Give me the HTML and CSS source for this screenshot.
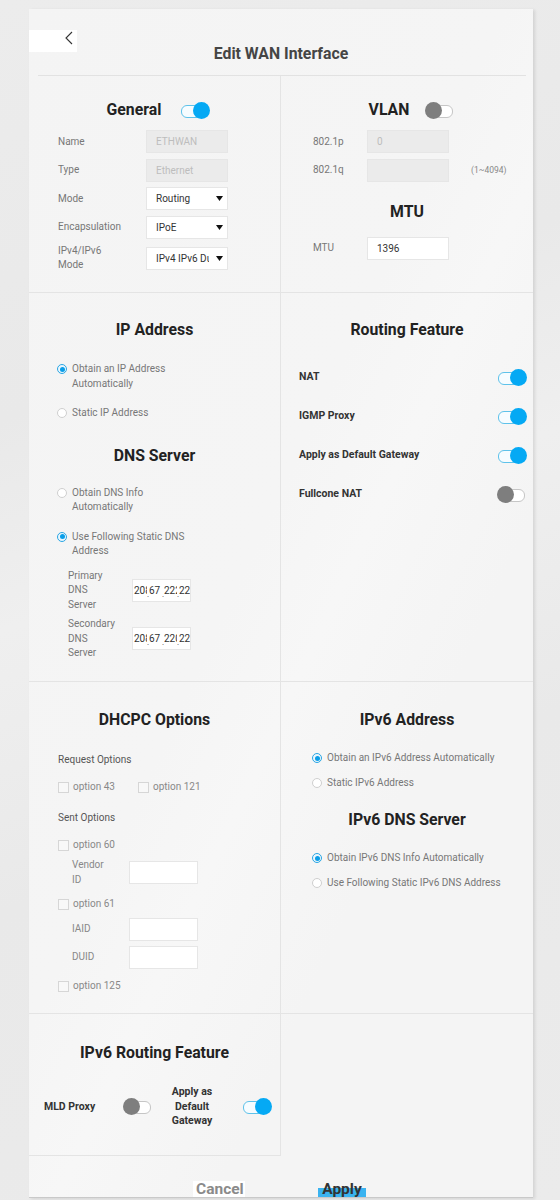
FILE: index.html
```html
<!DOCTYPE html>
<html>
<head>
<meta charset="utf-8">
<link rel="stylesheet" href="styles.css">
</head>
<body>
<div class="panel">
  <div class="head">
    <div class="back"><svg width="8" height="14" viewBox="0 0 8 14"><path d="M7 1 L1 7 L7 13" fill="none" stroke="#333" stroke-width="1.1"/></svg></div>
    <h1 class="title">Edit WAN Interface</h1>
  </div>
  <div class="rule"></div>
  <div class="grid">
    <!-- General -->
    <section class="cell left c-general">
      <div class="hrow hrow-general"><h2 class="h">General</h2><span class="tgl on"></span></div>
      <div class="form">
        <div class="frow"><span class="lab">Name</span><span class="inp dis">ETHWAN</span></div>
        <div class="frow"><span class="lab">Type</span><span class="inp dis">Ethernet</span></div>
        <div class="frow"><span class="lab">Mode</span><span class="inp sel"><span class="selt">Routing</span><svg class="arr" width="7" height="5" viewBox="0 0 7 5"><polygon points="0,0 7,0 3.5,5" fill="#111"/></svg></span></div>
        <div class="frow"><span class="lab">Encapsulation</span><span class="inp sel"><span class="selt">IPoE</span><svg class="arr" width="7" height="5" viewBox="0 0 7 5"><polygon points="0,0 7,0 3.5,5" fill="#111"/></svg></span></div>
        <div class="frow"><span class="lab lab2">IPv4/IPv6<br>Mode</span><span class="inp sel"><span class="selt">IPv4 IPv6 Dual Stack</span><svg class="arr" width="7" height="5" viewBox="0 0 7 5"><polygon points="0,0 7,0 3.5,5" fill="#111"/></svg></span></div>
      </div>
    </section>
    <!-- VLAN -->
    <section class="cell right c-vlan">
      <div class="hrow hrow-vlan"><h2 class="h">VLAN</h2><span class="tgl off"></span></div>
      <div class="form">
        <div class="frow"><span class="lab lab-v">802.1p</span><span class="inp dis">0</span></div>
        <div class="frow"><span class="lab lab-v">802.1q</span><span class="inp dis"></span><span class="note">(1~4094)</span></div>
      </div>
      <h2 class="h h-mtu">MTU</h2>
      <div class="form form-mtu">
        <div class="frow"><span class="lab lab-v">MTU</span><span class="inp val">1396</span></div>
      </div>
    </section>
    <!-- IP Address / DNS -->
    <section class="cell left c-ip">
      <h2 class="h">IP Address</h2>
      <div class="radio r-first"><span class="rd chk"></span><span class="rt">Obtain an IP Address Automatically</span></div>
      <div class="radio r-next"><span class="rd"></span><span class="rt">Static IP Address</span></div>
      <h2 class="h h-dns">DNS Server</h2>
      <div class="radio r-first2"><span class="rd"></span><span class="rt">Obtain DNS Info Automatically</span></div>
      <div class="radio r-next"><span class="rd chk"></span><span class="rt">Use Following Static DNS Address</span></div>
      <div class="dnsrow dns-first"><span class="dlab">Primary DNS Server</span>
        <span class="ipbox"><span class="seg">208</span><span class="dot">.</span><span class="seg">67</span><span class="dot">.</span><span class="seg">222</span><span class="dot">.</span><span class="seg">222</span></span></div>
      <div class="dnsrow dns-next"><span class="dlab">Secondary DNS Server</span>
        <span class="ipbox"><span class="seg">208</span><span class="dot">.</span><span class="seg">67</span><span class="dot">.</span><span class="seg">220</span><span class="dot">.</span><span class="seg">220</span></span></div>
    </section>
    <!-- Routing Feature -->
    <section class="cell right c-rf">
      <h2 class="h">Routing Feature</h2>
      <div class="trows">
        <div class="trow"><span class="blab">NAT</span><span class="tgl on"></span></div>
        <div class="trow"><span class="blab">IGMP Proxy</span><span class="tgl on"></span></div>
        <div class="trow"><span class="blab">Apply as Default Gateway</span><span class="tgl on"></span></div>
        <div class="trow"><span class="blab">Fullcone NAT</span><span class="tgl off"></span></div>
      </div>
    </section>
    <!-- DHCPC -->
    <section class="cell left c-dhcp">
      <h2 class="h">DHCPC Options</h2>
      <div class="sub sub-req">Request Options</div>
      <div class="cbrow cb-req"><span class="cb"><span class="box"></span>option 43</span><span class="cb"><span class="box"></span>option 121</span></div>
      <div class="sub sub-sent">Sent Options</div>
      <div class="cbrow cb-60"><span class="cb"><span class="box"></span>option 60</span></div>
      <div class="orow orow-vendor"><span class="olab">Vendor ID</span><span class="oinp"></span></div>
      <div class="cbrow cb-61"><span class="cb"><span class="box"></span>option 61</span></div>
      <div class="orow orow-iaid"><span class="olab">IAID</span><span class="oinp"></span></div>
      <div class="orow orow-duid"><span class="olab">DUID</span><span class="oinp"></span></div>
      <div class="cbrow cb-125"><span class="cb"><span class="box"></span>option 125</span></div>
    </section>
    <!-- IPv6 Address -->
    <section class="cell right c-v6">
      <h2 class="h">IPv6 Address</h2>
      <div class="radio1 r6-first"><span class="rd chk"></span><span class="rt1">Obtain an IPv6 Address Automatically</span></div>
      <div class="radio1 r6-next"><span class="rd"></span><span class="rt1">Static IPv6 Address</span></div>
      <h2 class="h h-v6dns">IPv6 DNS Server</h2>
      <div class="radio1 r6-first"><span class="rd chk"></span><span class="rt1">Obtain IPv6 DNS Info Automatically</span></div>
      <div class="radio1 r6-next"><span class="rd"></span><span class="rt1">Use Following Static IPv6 DNS Address</span></div>
    </section>
    <!-- IPv6 Routing -->
    <section class="cell left last c-v6r">
      <h2 class="h">IPv6 Routing Feature</h2>
      <div class="v6row">
        <span class="blab mld">MLD Proxy</span><span class="tgl off"></span>
        <span class="blab gw">Apply as Default Gateway</span><span class="tgl on"></span>
      </div>
    </section>
    <section class="cell right last c-empty"></section>
  </div>
  <div class="footer">
    <span class="btn cancel">Cancel</span>
    <span class="btn apply">Apply</span>
  </div>
</div>
</body>
</html>
```
FILE: styles.css
```css
* { box-sizing: border-box; margin: 0; padding: 0; }
html, body { width: 560px; height: 1200px; overflow: hidden; }
body {
  background: linear-gradient(160deg, #ececec 0%, #e9e9e9 30%, #efefef 45%, #e9e9e9 65%, #ebebeb 100%);
  font-family: Roboto, "Liberation Sans", sans-serif;
  color: #777;
}
.panel {
  margin: 9px 0 0 29px;
  width: 504px;
  height: 1189px;
  background: linear-gradient(115deg, #f4f4f4 0%, #f5f5f5 45%, #f7f7f7 55%, #f4f4f4 70%, #f4f4f4 100%);
  box-shadow: 2px 1px 3px rgba(0, 0, 0, 0.10);
  border-bottom: 1px solid #c9c9c9;
  overflow: hidden;
}
.head { display: grid; height: 66px; }
.head > * { grid-area: 1 / 1; }
.back {
  width: 48px; height: 22px; margin-top: 21px;
  background: #fff;
  display: flex; justify-content: flex-end; align-items: flex-start;
  padding: 1px 4px 0 0;
}
.title {
  align-self: start; margin-top: 35px;
  font-size: 15.8px; line-height: 20px; font-weight: 700;
  color: #454545; text-align: center;
}
.rule { height: 1px; background: #e2e2e2; margin: 0 7px 0 9px; }
.grid {
  display: grid;
  grid-template-columns: 252px 252px;
  grid-template-rows: 217px 389px 332px 142px;
}
.cell { border-bottom: 1px solid #e4e4e4; }
.cell.left { border-right: 1px solid #e4e4e4; }
.cell.right.last { border-bottom: none; }

.h { font-size: 15.8px; line-height: 20px; font-weight: 700; color: #222; text-align: center; }
.hrow { display: flex; align-items: center; justify-content: center; gap: 19px; }
.hrow-general { padding-left: 8px; }
.hrow-vlan { gap: 16px; padding-left: 10px; }

/* toggles */
.tgl { position: relative; display: inline-block; width: 30px; height: 17px; flex: none; }
.tgl::before {
  content: ""; position: absolute; left: 1px; right: 2px; top: 3px; height: 11px;
  border-radius: 6px; background: #fff; border: 1px solid #c6c6c6;
}
.tgl::after {
  content: ""; position: absolute; top: 0; width: 17px; height: 17px; border-radius: 50%;
}
.tgl.on::before { border-color: #5ec2ea; background: #f6fcff; }
.tgl.on::after { right: 0; background: #05a9f4; }
.tgl.off::after { left: 0; background: #7e7e7e; }

/* general / vlan forms */
.c-general { padding-top: 24px; }
.c-vlan { padding-top: 24px; }
.form { margin-top: 10px; display: flex; flex-direction: column; gap: 5.5px; }
.frow { display: flex; align-items: center; padding-left: 29px; }
.c-vlan .frow { padding-left: 32px; }
.lab { width: 88px; font-size: 10px; line-height: 14px; color: #777; flex: none; }
.lab-v { width: 54px; }
.inp {
  width: 82px; height: 23px; flex: none;
  border: 1px solid #e6e6e6; background: #fff;
  font-size: 10px; color: #333; padding-left: 9px;
  display: flex; align-items: center;
}
.inp.dis { background: #ebebeb; color: #bdbdbd; }
.inp.sel { justify-content: space-between; padding-right: 4px; }
.selt { width: 53px; overflow: hidden; white-space: nowrap; }
.arr { flex: none; }
.note { margin-left: 22px; font-size: 8.5px; color: #888; }
.h-mtu { margin-top: 20px; }
.form-mtu { margin-top: 15px; }

/* radios */
.c-ip { padding: 27px 0 0 28px; }
.c-ip .h { margin-left: -28px; }
.radio { display: flex; gap: 5px; }
.rd {
  width: 10px; height: 10px; border-radius: 50%; flex: none; margin-top: 2px;
  border: 1px solid #cfcfcf; background: #fff; position: relative;
}
.rd.chk { border-color: #2aa6e4; background: #eaf6fd; }
.rd.chk::after {
  content: ""; position: absolute; left: 1.5px; top: 1.5px; width: 5px; height: 5px;
  border-radius: 50%; background: #0a9ee8;
}
.rt { width: 125px; font-size: 10px; line-height: 14.5px; color: #777; }
.r-first { margin-top: 22px; }
.r-next { margin-top: 15px; }
.h-dns { margin-top: 25px; }
.r-first2 { margin-top: 20px; }
.dnsrow { display: flex; align-items: center; padding-left: 11px; }
.dns-first { margin-top: 10px; }
.dns-next { margin-top: 5px; }
.dlab { width: 50px; margin-right: 14px; font-size: 10px; line-height: 14.5px; color: #777; }
.ipbox {
  width: 59px; height: 23px; background: #fff; border: 1px solid #e6e6e6;
  display: flex; align-items: center; padding-left: 1px; overflow: hidden;
  font-size: 10px; color: #333;
}
.seg { width: 13px; overflow: hidden; white-space: nowrap; flex: none; text-align: left; }
.dot { width: 2px; flex: none; font-size: 8px; color: #333; overflow: hidden; position: relative; top: 4px; }

/* routing feature */
.c-rf { padding: 27px 6px 0 18px; }
.c-rf .h { margin: 0 -6px 0 -18px; }
.trows { margin-top: 28.5px; display: flex; flex-direction: column; gap: 22px; }
.trow { display: flex; justify-content: space-between; align-items: center; }
.blab { font-size: 10.5px; line-height: 14.5px; font-weight: 700; color: #333; }

/* dhcpc */
.c-dhcp { padding: 28px 0 0 29px; }
.c-dhcp .h { margin-left: -29px; }
.sub { font-size: 10px; line-height: 14px; color: #555; }
.sub-req { margin-top: 23px; }
.sub-sent { margin-top: 17px; }
.cbrow { display: flex; font-size: 10px; line-height: 14px; color: #888; }
.cb { display: flex; align-items: center; gap: 4px; }
.cb + .cb { margin-left: 23px; }
.box { width: 11px; height: 11px; border: 1px solid #d6d6d6; background: #f8f8f8; flex: none; }
.cb-req { margin-top: 13px; }
.cb-60 { margin-top: 13px; }
.cb-61 { margin-top: 10px; }
.cb-125 { margin-top: 10px; }
.orow { display: flex; align-items: center; padding-left: 14px; }
.olab { width: 57px; font-size: 10px; line-height: 14.5px; color: #888; padding-right: 22px; }
.oinp { width: 69px; height: 23px; background: #fff; border: 1px solid #e6e6e6; }
.orow-vendor { margin-top: 6px; }
.orow-iaid { margin-top: 7px; }
.orow-duid { margin-top: 5px; }

/* ipv6 */
.c-v6 { padding: 28px 0 0 31px; }
.c-v6 .h { margin-left: -31px; }
.radio1 { display: flex; gap: 5px; }
.rt1 { font-size: 10px; line-height: 14px; color: #777; white-space: nowrap; }
.radio1 .rd { margin-top: 2px; }
.r6-first { margin-top: 21px; }
.r6-next { margin-top: 11px; }
.h-v6dns { margin-top: 20px; }

/* ipv6 routing */
.c-v6r { padding-top: 29px; }
.v6row { display: flex; align-items: center; margin-top: 22px; padding-left: 15px; }
.mld { width: 79px; }
.gw { width: 44px; margin: 0 28px 0 17px; text-align: center; }

/* footer */
.footer { display: flex; padding: 25px 0 0 164px; gap: 73px; }
.btn { font-size: 15.5px; line-height: 17px; font-weight: 700; padding: 0 3px; }
.cancel { background: #fff; color: #8a8a8a; width: 52px; text-align: center; }
.apply { color: #333; width: 48px; text-align: center; background: linear-gradient(#f4f4f4 0, #f4f4f4 42%, #3ab3f0 42%); }
```
